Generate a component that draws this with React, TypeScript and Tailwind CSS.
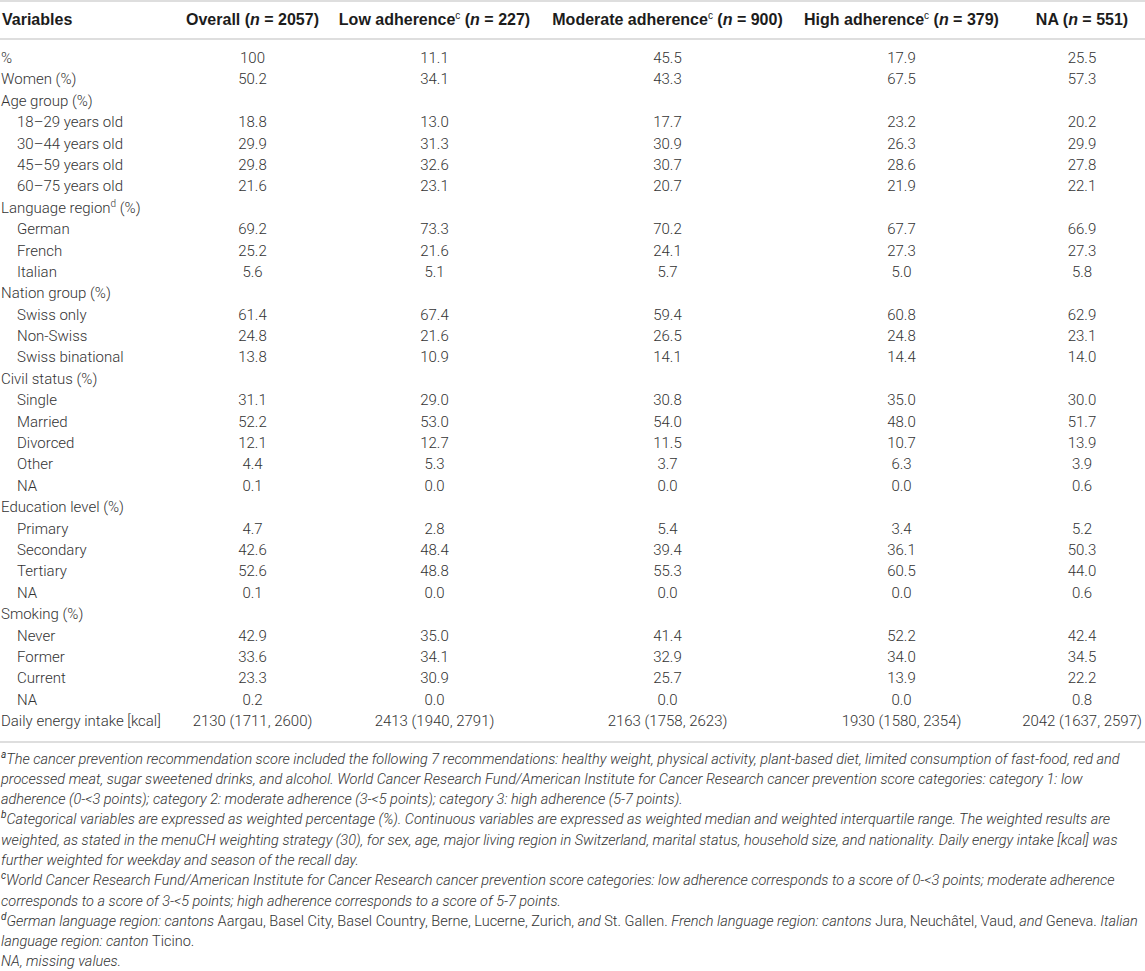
import React from 'react';

type Row = {
  label: React.ReactNode;
  sub?: boolean;
  values?: string[];
};

function Sup({ children }: { children: React.ReactNode }) {
  return <sup className="text-[10px] font-normal -top-[6px]">{children}</sup>;
}

const rows: Row[] = [
  { label: '%', values: ['100', '11.1', '45.5', '17.9', '25.5'] },
  { label: 'Women (%)', values: ['50.2', '34.1', '43.3', '67.5', '57.3'] },
  { label: 'Age group (%)' },
  { label: '18–29 years old', sub: true, values: ['18.8', '13.0', '17.7', '23.2', '20.2'] },
  { label: '30–44 years old', sub: true, values: ['29.9', '31.3', '30.9', '26.3', '29.9'] },
  { label: '45–59 years old', sub: true, values: ['29.8', '32.6', '30.7', '28.6', '27.8'] },
  { label: '60–75 years old', sub: true, values: ['21.6', '23.1', '20.7', '21.9', '22.1'] },
  {
    label: (
      <>
        Language region<sup className="text-[10px] -top-[6px]">d</sup> (%)
      </>
    ),
  },
  { label: 'German', sub: true, values: ['69.2', '73.3', '70.2', '67.7', '66.9'] },
  { label: 'French', sub: true, values: ['25.2', '21.6', '24.1', '27.3', '27.3'] },
  { label: 'Italian', sub: true, values: ['5.6', '5.1', '5.7', '5.0', '5.8'] },
  { label: 'Nation group (%)' },
  { label: 'Swiss only', sub: true, values: ['61.4', '67.4', '59.4', '60.8', '62.9'] },
  { label: 'Non-Swiss', sub: true, values: ['24.8', '21.6', '26.5', '24.8', '23.1'] },
  { label: 'Swiss binational', sub: true, values: ['13.8', '10.9', '14.1', '14.4', '14.0'] },
  { label: 'Civil status (%)' },
  { label: 'Single', sub: true, values: ['31.1', '29.0', '30.8', '35.0', '30.0'] },
  { label: 'Married', sub: true, values: ['52.2', '53.0', '54.0', '48.0', '51.7'] },
  { label: 'Divorced', sub: true, values: ['12.1', '12.7', '11.5', '10.7', '13.9'] },
  { label: 'Other', sub: true, values: ['4.4', '5.3', '3.7', '6.3', '3.9'] },
  { label: 'NA', sub: true, values: ['0.1', '0.0', '0.0', '0.0', '0.6'] },
  { label: 'Education level (%)' },
  { label: 'Primary', sub: true, values: ['4.7', '2.8', '5.4', '3.4', '5.2'] },
  { label: 'Secondary', sub: true, values: ['42.6', '48.4', '39.4', '36.1', '50.3'] },
  { label: 'Tertiary', sub: true, values: ['52.6', '48.8', '55.3', '60.5', '44.0'] },
  { label: 'NA', sub: true, values: ['0.1', '0.0', '0.0', '0.0', '0.6'] },
  { label: 'Smoking (%)' },
  { label: 'Never', sub: true, values: ['42.9', '35.0', '41.4', '52.2', '42.4'] },
  { label: 'Former', sub: true, values: ['33.6', '34.1', '32.9', '34.0', '34.5'] },
  { label: 'Current', sub: true, values: ['23.3', '30.9', '25.7', '13.9', '22.2'] },
  { label: 'NA', sub: true, values: ['0.2', '0.0', '0.0', '0.0', '0.8'] },
  {
    label: 'Daily energy intake [kcal]',
    values: ['2130 (1711, 2600)', '2413 (1940, 2791)', '2163 (1758, 2623)', '1930 (1580, 2354)', '2042 (1637, 2597)'],
  },
];

const grid = 'grid grid-cols-[177px_151px_213px_253px_215px_136px]';

function N({ n }: { n: string }) {
  return (
    <>
      (<i>n</i> = {n})
    </>
  );
}

export default function App() {
  return (
    <div className="w-[1145px] bg-white text-[#333] font-['Roboto',sans-serif] font-light">
      {/* header */}
      <div className={`${grid} h-[40px] items-center border-y-2 border-[#dedede] text-[16px] font-bold text-[#1c1c1c] font-['Liberation_Sans',Arial,sans-serif] whitespace-nowrap`}>
        <div className="pl-[2px]">Variables</div>
        <div className="text-center">
          Overall <N n="2057" />
        </div>
        <div className="text-center">
          Low adherence<Sup>c</Sup> <N n="227" />
        </div>
        <div className="text-center">
          Moderate adherence<Sup>c</Sup> <N n="900" />
        </div>
        <div className="text-center">
          High adherence<Sup>c</Sup> <N n="379" />
        </div>
        <div className="text-center pl-[10px]">
          NA <N n="551" />
        </div>
      </div>

      {/* body */}
      <div className="py-2 border-b-2 border-[#dedede] text-[15px] leading-[21.4px] whitespace-nowrap">
        {rows.map((row, i) => (
          <div key={i} className={`${grid} h-[21.4px]`}>
            <div className={row.sub ? 'pl-[17px]' : 'pl-[1px]'}>{row.label}</div>
            {(row.values ?? ['', '', '', '', '']).map((v, j) => (
              <div key={j} className={j === 4 ? 'text-center pl-[10px]' : 'text-center'}>
                {v}
              </div>
            ))}
          </div>
        ))}
      </div>

      {/* footnotes */}
      <div className="pt-[7px] pl-[1px] text-[14.5px] leading-[20.3px] italic text-[#333]">
        <p>
          <Sup>a</Sup>The cancer prevention recommendation score included the following 7 recommendations: healthy weight, physical activity, plant-based diet, limited consumption of fast-food, red and
          <br />
          processed meat, sugar sweetened drinks, and alcohol. World Cancer Research Fund/American Institute for Cancer Research cancer prevention score categories: category 1: low
          <br />
          adherence (0-&lt;3 points); category 2: moderate adherence (3-&lt;5 points); category 3: high adherence (5-7 points).
        </p>
        <p>
          <Sup>b</Sup>Categorical variables are expressed as weighted percentage (%). Continuous variables are expressed as weighted median and weighted interquartile range. The weighted results are
          <br />
          weighted, as stated in the menuCH weighting strategy (30), for sex, age, major living region in Switzerland, marital status, household size, and nationality. Daily energy intake [kcal] was
          <br />
          further weighted for weekday and season of the recall day.
        </p>
        <p>
          <Sup>c</Sup>World Cancer Research Fund/American Institute for Cancer Research cancer prevention score categories: low adherence corresponds to a score of 0-&lt;3 points; moderate adherence
          <br />
          corresponds to a score of 3-&lt;5 points; high adherence corresponds to a score of 5-7 points.
        </p>
        <p>
          <Sup>d</Sup>German language region: cantons <span className="not-italic">Aargau, Basel City, Basel Country, Berne, Lucerne, Zurich,</span> and{' '}
          <span className="not-italic">St. Gallen.</span> French language region: cantons{' '}
          <span className="not-italic">Jura, Neuchâtel, Vaud,</span> and <span className="not-italic">Geneva.</span> Italian
          <br />
          language region: canton <span className="not-italic">Ticino.</span>
        </p>
        <p>NA, missing values.</p>
      </div>
    </div>
  );
}
